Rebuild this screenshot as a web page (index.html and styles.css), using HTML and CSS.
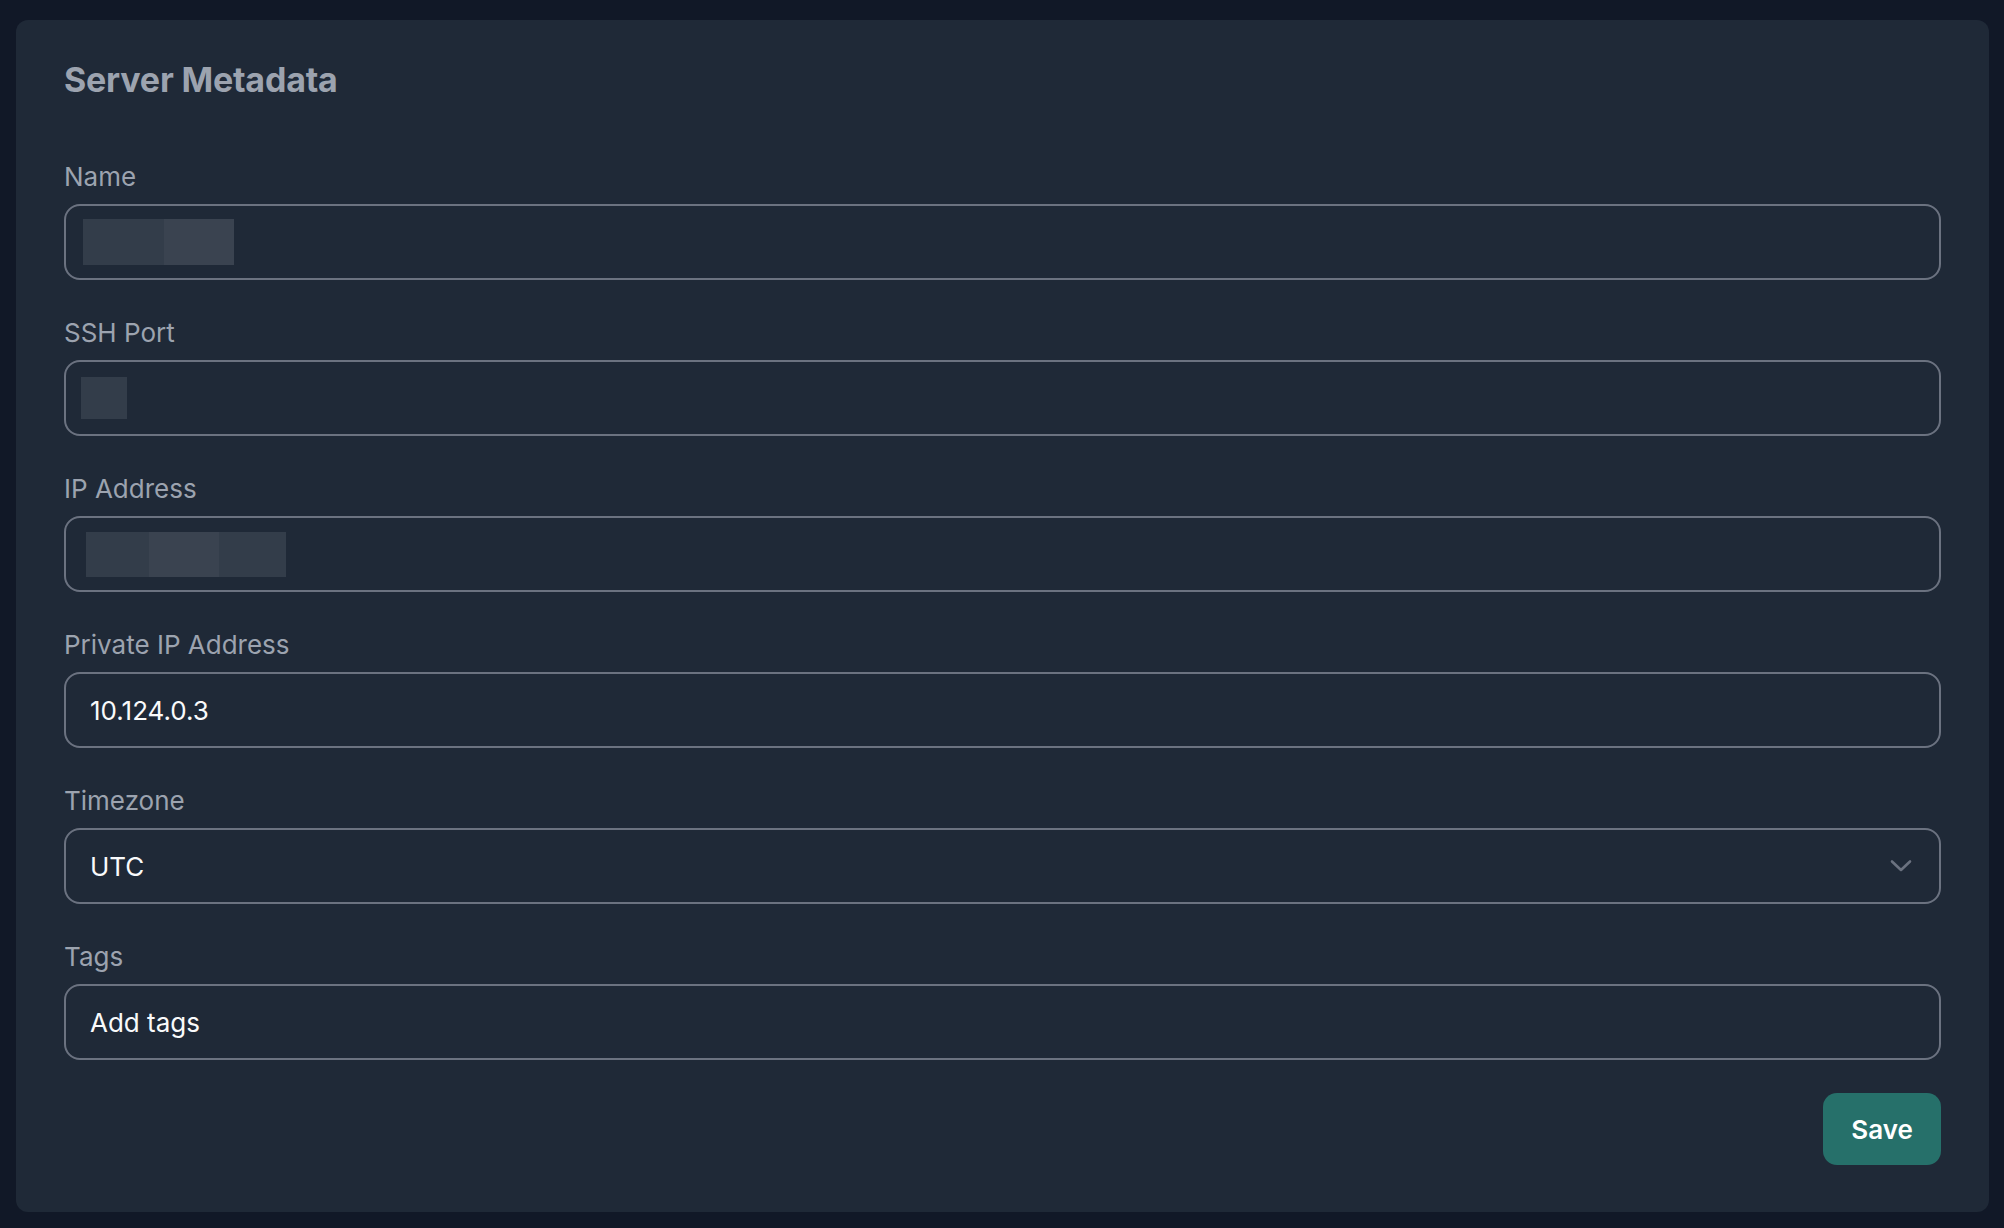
FILE: index.html
```html
<!DOCTYPE html>
<html lang="en">
<head>
<meta charset="utf-8">
<title>Server Metadata</title>
<link rel="stylesheet" href="styles.css">
</head>
<body>
<main class="card">
  <h1 class="title">Server Metadata</h1>
  <form class="form">
    <div class="field">
      <label class="label">Name</label>
      <div class="box">
        <span class="redact r-name"><span class="seg s1 w81"></span><span class="seg s2 w70"></span></span>
      </div>
    </div>
    <div class="field">
      <label class="label">SSH Port</label>
      <div class="box">
        <span class="redact r-ssh"><span class="seg s1 w46"></span></span>
      </div>
    </div>
    <div class="field">
      <label class="label">IP Address</label>
      <div class="box">
        <span class="redact r-ip"><span class="seg s1 w63"></span><span class="seg s2 w70"></span><span class="seg s1 w67"></span></span>
      </div>
    </div>
    <div class="field">
      <label class="label">Private IP Address</label>
      <div class="box"><span class="value">10.124.0.3</span></div>
    </div>
    <div class="field">
      <label class="label">Timezone</label>
      <div class="box select">
        <span class="value">UTC</span>
        <svg class="chevron" width="22" height="14" viewBox="0 0 22 14" fill="none"><path d="M2 2.5 L11 11 L20 2.5" stroke="currentColor" stroke-width="2.6" stroke-linecap="round" stroke-linejoin="round"/></svg>
      </div>
    </div>
    <div class="field">
      <label class="label">Tags</label>
      <div class="box"><span class="value">Add tags</span></div>
    </div>
    <div class="actions">
      <button type="button" class="save">Save</button>
    </div>
  </form>
</main>
</body>
</html>
```

FILE: styles.css
```css
* { box-sizing: border-box; }
html, body { margin: 0; }
body {
  background: #111827;
  padding: 20px 15px 16px 16px;
  font-family: Inter, "Noto Sans", "Liberation Sans", sans-serif;
  height: 1228px;
}
.card {
  background: #1f2937;
  border-radius: 12px;
  height: 1192px;
  padding: 38px 48px 48px 48px;
}
.title {
  margin: 0;
  font-size: 34px;
  line-height: 43px;
  font-weight: 700;
  color: #9ca3af;
  letter-spacing: -0.2px;
}
.form {
  margin-top: 58px;
  display: flex;
  flex-direction: column;
  gap: 35px;
}
.field {
  display: flex;
  flex-direction: column;
  gap: 9px;
}
.label {
  font-size: 26px;
  line-height: 36px;
  color: #9ca3af;
  font-weight: 400;
}
.box {
  height: 76px;
  border: 2px solid #6b7280;
  border-radius: 16px;
  display: flex;
  align-items: center;
  padding: 0 24px;
}
.value {
  color: #f9fafb;
  font-size: 26px;
  line-height: 36px;
  padding-top: 2px;
}
.select { justify-content: space-between; padding-right: 27px; }
.chevron { color: #6b7280; }
.redact { display: flex; height: 46px; }
.r-name { margin-left: -7px; }
.r-ssh { margin-left: -9px; height: 42px; }
.r-ip { margin-left: -4px; height: 45px; }
.seg { display: block; height: 100%; }
.s1 { background: #333d4a; }
.s2 { background: #3a4350; }
.w81 { width: 81px; }
.w70 { width: 70px; }
.w46 { width: 46px; }
.w63 { width: 63px; }
.w67 { width: 67px; }
.actions {
  display: flex;
  justify-content: flex-end;
  margin-top: -2px;
}
.save {
  width: 118px;
  height: 72px;
  border: 0;
  border-radius: 14px;
  background: #26706a;
  color: #ffffff;
  font-family: inherit;
  font-size: 26px;
  font-weight: 600;
  cursor: pointer;
}
```
